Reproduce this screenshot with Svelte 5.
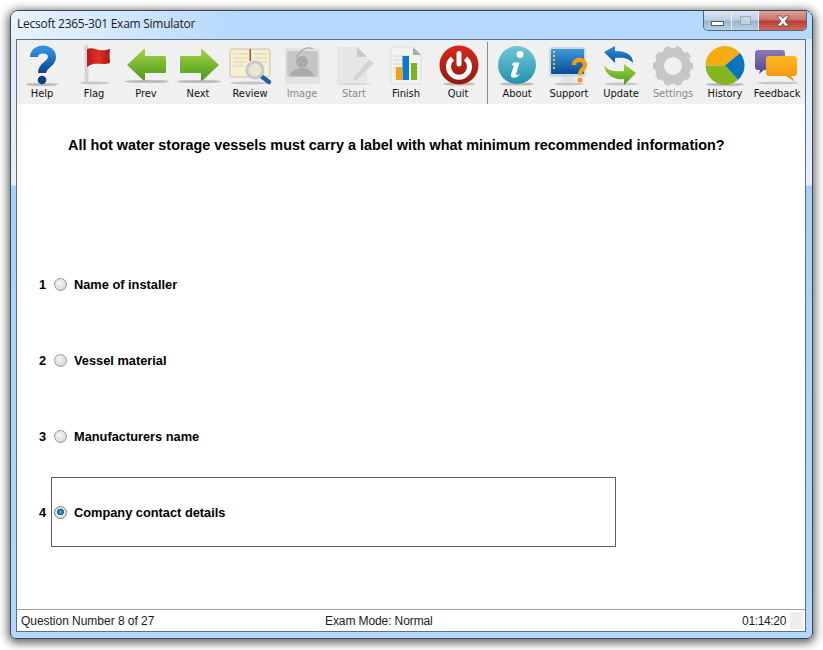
<script lang="ts">
  const leftTools = [
    { id: "help", label: "Help" },
    { id: "flag", label: "Flag" },
    { id: "prev", label: "Prev" },
    { id: "next", label: "Next" },
    { id: "review", label: "Review" },
    { id: "image", label: "Image", off: true },
    { id: "start", label: "Start", off: true },
    { id: "finish", label: "Finish" },
    { id: "quit", label: "Quit" },
  ];
  const rightTools = [
    { id: "about", label: "About" },
    { id: "support", label: "Support" },
    { id: "update", label: "Update" },
    { id: "settings", label: "Settings", off: true },
    { id: "history", label: "History" },
    { id: "feedback", label: "Feedback" },
  ];
  const options = [
    { n: 1, text: "Name of installer" },
    { n: 2, text: "Vessel material" },
    { n: 3, text: "Manufacturers name" },
    { n: 4, text: "Company contact details" },
  ];
  let selected = $state(4);

  // gear outline, computed so the teeth stay even
  const gear = Array.from({ length: 10 }, (_, i) => {
    const a = (i * 36 * Math.PI) / 180;
    const c = Math.cos(a);
    const s = Math.sin(a);
    return `M${26 + 13 * c - 4 * s} ${23 + 13 * s + 4 * c}L${26 + 20 * c - 3 * s} ${23 + 20 * s + 3 * c}L${26 + 20 * c + 3 * s} ${23 + 20 * s - 3 * c}L${26 + 13 * c + 4 * s} ${23 + 13 * s - 4 * c}Z`;
  }).join("");
</script>

{#snippet icon(id)}
  <svg class="icon" width="52" height="48" viewBox="0 0 52 48">
    {#if id === "help"}
      <ellipse cx="26" cy="41.5" rx="16" ry="1.6" fill="#999" opacity=".6" />
      <path d="M18 14C18 4 36 4 36 14C36 22 26 21 26 30" fill="none" stroke="url(#blue)" stroke-width="8" />
      <circle cx="26" cy="37" r="4.3" fill="#0d3f86" />
    {:else if id === "flag"}
      <ellipse cx="27" cy="40" rx="15" ry="1.5" fill="#aaa" opacity=".6" />
      <rect x="17" y="3" width="3" height="37" fill="#d9d9d9" stroke="#bbb" stroke-width=".5" />
      <path d="M19 6C26 3 30 10 42 6C41 12 42 17 42 20C33 23 28 18 19 24Z" fill="url(#red)" />
    {:else if id === "prev"}
      <ellipse cx="27" cy="38.5" rx="22" ry="1.6" fill="#999" opacity=".6" />
      <path d="M7 22L24 6Q25 5 25 8V13H45Q46 13 46 15V29Q46 30 45 30H25V36Q25 39 23 37Z" fill="url(#green)" />
    {:else if id === "next"}
      <ellipse cx="27" cy="38.5" rx="22" ry="1.6" fill="#999" opacity=".6" />
      <path d="M47 22L30 6Q29 5 29 8V13H9Q8 13 8 15V29Q8 30 9 30H29V36Q29 39 31 37Z" fill="url(#green)" />
    {:else if id === "review"}
      <ellipse cx="25" cy="40" rx="19" ry="1.5" fill="#aaa" opacity=".6" />
      <rect x="6" y="6" width="40" height="28" rx="2" fill="#f6efd2" stroke="#c9c2a6" />
      <path d="M9 11H24M9 15H24M9 19H22M9 23H20M30 11H43M30 15H43M30 19H43" stroke="#ddd5b2" />
      <rect x="25.5" y="6" width="1.5" height="12" fill="#b5453c" />
      <path d="M37 33L45 39" stroke="#1d5fa3" stroke-width="4.5" stroke-linecap="round" />
      <circle cx="31" cy="27" r="8" fill="#e9e6d2" stroke="#c8c8c8" stroke-width="3" />
    {:else if id === "image"}
      <rect x="9" y="5" width="35" height="36" rx="3" fill="#e2e2e2" />
      <rect x="11" y="8" width="31" height="26" rx="2" fill="#c6c6c6" />
      <circle cx="26" cy="19" r="6" fill="#aaa" />
      <path d="M14 33C16 26 22 25 26 25C31 25 36 27 38 33Z" fill="#aaa" />
      <path d="M20 15C24 7 31 3 37 6" fill="none" stroke="#a8a8a8" stroke-width="1.2" />
    {:else if id === "start"}
      <path d="M9 4H29L39 14V40H9Z" fill="#e6e6e6" />
      <path d="M29 4V14H39Z" fill="#c9c9c9" />
      <path d="M25 34L41 16L46 20L30 37L24 39Z" fill="#d3d3d3" stroke="#eee" />
      <ellipse cx="26" cy="41" rx="18" ry="1.2" fill="#ccc" opacity=".6" />
    {:else if id === "finish"}
      <path d="M11 4H33L41 12V41H11Z" fill="#f2f2ee" stroke="#ddd" />
      <path d="M33 4V12H41Z" fill="#aaa" />
      <path d="M13 13H30M13 17H30M13 21H39M13 25H39M13 29H39M13 33H39" stroke="#d8d8d0" />
      <rect x="16" y="24" width="6" height="13" fill="#f2a019" />
      <rect x="22.5" y="13" width="6.5" height="24" fill="#1478c8" />
      <rect x="31" y="20" width="6" height="17" fill="#79b522" />
    {:else if id === "quit"}
      <ellipse cx="27" cy="41" rx="16" ry="1.6" fill="#999" opacity=".6" />
      <circle cx="27" cy="22" r="19.5" fill="url(#quit)" />
      <path d="M20.5 15.5A10.5 10.5 0 1 0 33.5 15.5" fill="none" stroke="#fff" stroke-width="5" />
      <path d="M27 10.5V21" stroke="#fff" stroke-width="5" stroke-linecap="round" />
    {:else if id === "about"}
      <ellipse cx="26" cy="41" rx="17" ry="1.6" fill="#999" opacity=".6" />
      <circle cx="26" cy="22" r="19" fill="url(#teal)" />
      <circle cx="29" cy="11.5" r="3.4" fill="#fff" />
      <path d="M22 19.5H28.5L25 31.5Q25 33 29 31C27 35 19 36.5 20 31.5L23 22.5H21Z" fill="#fff" />
    {:else if id === "support"}
      <ellipse cx="26" cy="41" rx="15" ry="1.4" fill="#aaa" opacity=".6" />
      <rect x="6" y="4" width="37" height="30" rx="3" fill="#c9d9e4" />
      <rect x="8" y="6" width="33" height="25" rx="1" fill="url(#screen)" />
      <path d="M10 8h2v2h-2zM10 12h2v2h-2zM10 16h2v2h-2zM10 20h2v2h-2zM10 24h2v2h-2z" fill="#f0c24a" />
      <path d="M19 34H31L33 39H17Z" fill="#dfe5ea" />
      <path d="M31 22C31 15 42 15 42 22C42 27 37 26 37 32" fill="none" stroke="#f59a12" stroke-width="4.4" />
      <circle cx="37" cy="37" r="2.6" fill="#f59a12" />
    {:else if id === "update"}
      <ellipse cx="26" cy="41" rx="17" ry="1.4" fill="#aaa" opacity=".6" />
      <path d="M9 9L20 3V8C30 8 38 11 38 20C34 15 28 14 20 15V20Z" fill="url(#blue2)" />
      <path d="M41 30L29 42V36C20 37 11 33 9 23C14 28 21 29 29 28V21Z" fill="url(#green)" />
    {:else if id === "settings"}
      <path d={gear} fill="#c6c6c6" />
      <circle cx="26" cy="23" r="13.5" fill="none" stroke="#c6c6c6" stroke-width="9" />
    {:else if id === "history"}
      <ellipse cx="26" cy="41.5" rx="19" ry="1.6" fill="#999" opacity=".6" />
      <path d="M26 22.5H6.5A19.5 19.5 0 0 1 41 10Z" fill="#f4ac12" />
      <path d="M26 22.5L41 10A19.5 19.5 0 0 1 39 37Z" fill="#0a75bd" />
      <path d="M26 22.5L39 37A19.5 19.5 0 0 1 6.5 22.5Z" fill="#84b61d" />
    {:else if id === "feedback"}
      <ellipse cx="27" cy="40" rx="21" ry="1.3" fill="#aaa" opacity=".6" />
      <path d="M7 7H31Q34 7 34 10V24Q34 27 31 27H13L8 31L9 27H7Q4 27 4 24V10Q4 7 7 7Z" fill="url(#purple)" />
      <path d="M18 13H43Q46 13 46 16V30Q46 33 43 33H40L44 39L35 33H18Q15 33 15 30V16Q15 13 18 13Z" fill="url(#orange)" />
    {/if}
  </svg>
{/snippet}

{#snippet tool(t)}
  <div class="tool" class:off={t.off}>
    {@render icon(t.id)}
    <span>{t.label}</span>
  </div>
{/snippet}

<svg class="defs" width="0" height="0" aria-hidden="true">
  <defs>
    <linearGradient id="blue" x1="0" y1="0" x2="0" y2="1"><stop offset="0" stop-color="#2f8fe0" /><stop offset="1" stop-color="#0c4390" /></linearGradient>
    <linearGradient id="blue2" x1="0" y1="0" x2="0" y2="1"><stop offset="0" stop-color="#2b8ed8" /><stop offset="1" stop-color="#0d5ba6" /></linearGradient>
    <linearGradient id="red" x1="0" y1="0" x2="1" y2="0"><stop offset="0" stop-color="#b81b1b" /><stop offset=".5" stop-color="#e03028" /><stop offset="1" stop-color="#a81818" /></linearGradient>
    <linearGradient id="green" x1="0" y1="0" x2="0" y2="1"><stop offset="0" stop-color="#a4d244" /><stop offset="1" stop-color="#4a9a1c" /></linearGradient>
    <linearGradient id="quit" x1="0" y1="0" x2="0" y2="1"><stop offset="0" stop-color="#d8281c" /><stop offset="1" stop-color="#901a12" /></linearGradient>
    <linearGradient id="teal" x1="0" y1="0" x2="0" y2="1"><stop offset="0" stop-color="#72c6d8" /><stop offset="1" stop-color="#2292ae" /></linearGradient>
    <linearGradient id="screen" x1="0" y1="0" x2="0" y2="1"><stop offset="0" stop-color="#3b9bdc" /><stop offset="1" stop-color="#0b4a94" /></linearGradient>
    <linearGradient id="purple" x1="0" y1="0" x2="0" y2="1"><stop offset="0" stop-color="#8b7ab8" /><stop offset="1" stop-color="#57458c" /></linearGradient>
    <linearGradient id="orange" x1="0" y1="0" x2="0" y2="1"><stop offset="0" stop-color="#fbb825" /><stop offset="1" stop-color="#f29208" /></linearGradient>
  </defs>
</svg>

<div class="page">
  <div class="window">
    <div class="titlebar">
      <span class="title">Lecsoft 2365-301 Exam Simulator</span>
      <div class="controls">
        <div class="ctl min"><i></i></div>
        <div class="ctl max"><i></i></div>
        <div class="ctl close">
          <svg width="16" height="12" viewBox="0 0 16 12"><path d="M2 1H6L8 3.5L10 1H14L10 6L14 11H10L8 8.5L6 11H2L6 6Z" fill="#fff" stroke="#5c3a3a" stroke-width=".7" /></svg>
        </div>
      </div>
    </div>
    <div class="client">
      <div class="toolbar">
        {#each leftTools as t}{@render tool(t)}{/each}
        <div class="sep"></div>
        {#each rightTools as t}{@render tool(t)}{/each}
      </div>
      <main>
        <h1>All hot water storage vessels must carry a label with what minimum recommended information?</h1>
        <div class="options">
          {#each options as o}
            <div class="option">
              <b>{o.n}</b>
              <label class:picked={selected === o.n}>
                <input type="radio" name="answer" value={o.n} bind:group={selected} />
                <span>{o.text}</span>
              </label>
            </div>
          {/each}
        </div>
      </main>
      <footer>
        <span class="status-q">Question Number 8 of 27</span>
        <span class="status-mode">Exam Mode: Normal</span>
        <span class="status-time">01:14:20</span>
        <span class="grip"></span>
      </footer>
    </div>
  </div>
</div>

<style>
  :global(body) {
    background: #fff;
    font-family: "Liberation Sans", Arial, sans-serif;
  }

  .defs {
    position: absolute;
  }

  .page {
    width: 823px;
    height: 650px;
    padding: 10px 10px 11px 10px;
    box-sizing: border-box;
    overflow: hidden;
  }

  .window {
    height: 100%;
    box-sizing: border-box;
    display: flex;
    flex-direction: column;
    border: 1px solid #3a4654;
    border-radius: 8px 8px 6px 6px;
    background: linear-gradient(180deg, #b9dafc 0, #dcecfd 30px, #e3f0fd 174px, #a9d1f8 175px, #b4d8fb 100%);
    box-shadow: 0 2px 10px 2px rgba(0, 0, 0, 0.62);
  }

  .titlebar {
    height: 28px;
    flex: none;
    display: flex;
    align-items: flex-start;
    justify-content: space-between;
    padding-left: 6px;
    border-radius: 7px 7px 0 0;
    background: linear-gradient(90deg, #e8f3fe 0, #d6e9fd 90px, #b5d8fd 230px);
  }

  .title {
    font: 12px/26px "Open Sans", sans-serif;
    letter-spacing: -0.26px;
    color: #1a1a1a;
  }

  .controls {
    display: flex;
    margin-right: 5px;
    height: 19px;
    border: 1px solid #55677a;
    border-top: none;
    border-radius: 0 0 5px 5px;
    overflow: hidden;
  }

  .ctl {
    display: flex;
    align-items: center;
    justify-content: center;
    height: 100%;
    background: linear-gradient(180deg, #d8e5f2 0, #bdd1e4 48%, #9cb4cb 52%, #b9cfe3 100%);
    border-right: 1px solid #e8f0f8;
  }

  .min {
    width: 27px;
  }

  .min i {
    width: 11px;
    height: 3px;
    margin-top: 6px;
    background: #fff;
    border: 1px solid #4f5f70;
  }

  .max {
    width: 26px;
  }

  .max i {
    width: 9px;
    height: 7px;
    border: 1px solid #8ea3b8;
    background: #c8d8e8;
    opacity: 0.8;
  }

  .close {
    width: 47px;
    border-right: none;
    background: linear-gradient(180deg, #dfa49a 0, #c9706a 48%, #b83a32 52%, #cf6b5e 100%);
  }

  .client {
    flex: 1;
    min-height: 0;
    margin: 0 6px 6px 5px;
    display: flex;
    flex-direction: column;
    border: 1px solid #5d6f82;
    background: #fff;
  }

  .toolbar {
    height: 64px;
    flex: none;
    display: flex;
    padding-left: 0;
    background: #f0f0f0;
  }

  .tool {
    width: 52px;
    flex: none;
    display: flex;
    flex-direction: column;
    align-items: center;
    padding-top: 3px;
    font-family: "DejaVu Sans Condensed", "DejaVu Sans", sans-serif;
    font-stretch: condensed;
    font-size: 11px;
    letter-spacing: -0.05px;
    color: #111;
  }

  .tool:first-child {
    margin-left: -1px;
  }

  .tool span {
    white-space: nowrap;
    line-height: 14px;
    margin-top: -4px;
  }

  .tool.off span {
    color: #8a8a8a;
  }

  .icon {
    display: block;
    flex: none;
  }

  .sep {
    width: 1px;
    height: 62px;
    margin: 2px 3px 0 3px;
    background: #8c8c8c;
  }

  main {
    flex: 1;
    min-height: 0;
  }

  h1 {
    margin: 32px 0 0;
    padding-left: 51px;
    font-size: 14.4px;
    line-height: 18px;
    font-weight: 700;
    white-space: nowrap;
    color: #000;
  }

  .options {
    margin-top: 95px;
    display: flex;
    flex-direction: column;
    gap: 6px;
  }

  .option {
    display: flex;
    align-items: center;
    padding-left: 22px;
    height: 70px;
    font-size: 12.8px;
    font-weight: 700;
    color: #000;
  }

  .option b {
    width: 12px;
  }

  label {
    width: 565px;
    height: 70px;
    box-sizing: border-box;
    display: flex;
    align-items: center;
    padding-left: 2px;
    border: 1px solid transparent;
  }

  label.picked {
    border-color: #5e5e5e;
  }

  input {
    appearance: none;
    width: 13px;
    height: 13px;
    margin: 0 7px 0 0;
    box-sizing: border-box;
    border: 1px solid #9a9a9a;
    border-radius: 50%;
    background: radial-gradient(circle at 40% 35%, #f4f4f4, #cfcfcf);
  }

  input:checked {
    background: radial-gradient(circle at 50% 45%, #4fb0e0 0, #0f5f96 3.2px, #e8e8e8 3.6px, #d8d8d8 100%);
    border-color: #7a7a7a;
  }

  footer {
    height: 21px;
    flex: none;
    display: grid;
    grid-template-columns: 290px 1fr auto 17px;
    align-items: center;
    border-top: 1px solid #a0a0a0;
    padding-left: 4px;
    font-size: 12px;
    color: #1a1a1a;
  }

  .status-q {
    letter-spacing: -0.03px;
  }

  .status-mode {
    padding-left: 14px;
    letter-spacing: -0.1px;
  }

  .status-time {
    padding-right: 2px;
    letter-spacing: -0.35px;
  }

  .grip {
    height: 17px;
    width: 13px;
    justify-self: end;
    margin-right: 2px;
    background: #eeecec;
  }
</style>
